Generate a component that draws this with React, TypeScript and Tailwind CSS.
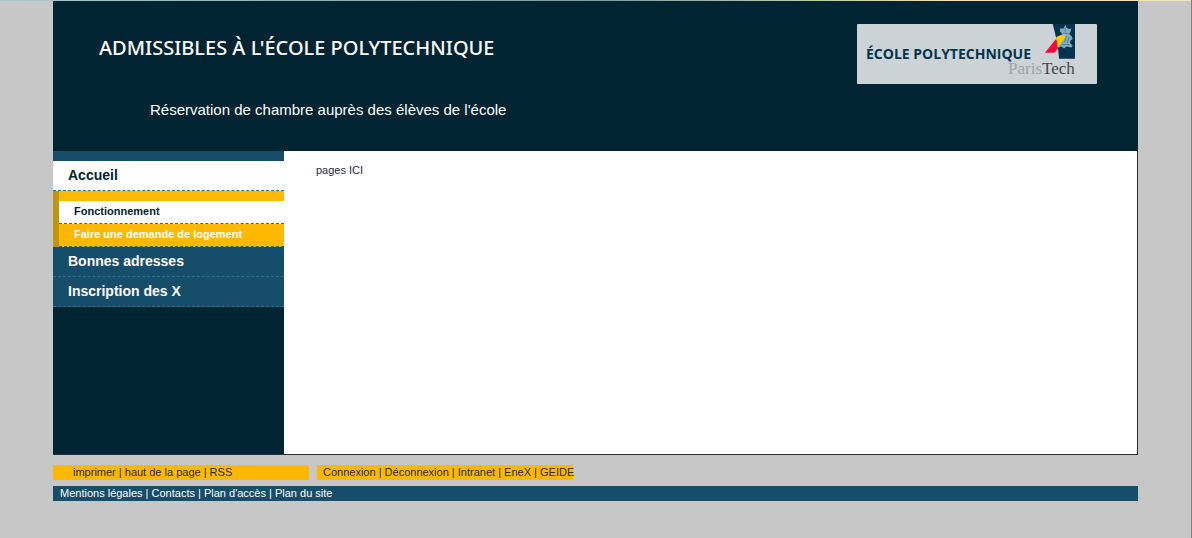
import React from "react";

type LinkItem = { label: string; href: string };

const pageLinks: LinkItem[] = [
  { label: "imprimer", href: "#imprimer" },
  { label: "haut de la page", href: "#haut" },
  { label: "RSS", href: "#rss" },
];

const accountLinks: LinkItem[] = [
  { label: "Connexion", href: "#connexion" },
  { label: "Déconnexion", href: "#deconnexion" },
  { label: "Intranet", href: "#intranet" },
  { label: "EneX", href: "#enex" },
  { label: "GEIDE", href: "#geide" },
];

const siteLinks: LinkItem[] = [
  { label: "Mentions légales", href: "#mentions" },
  { label: "Contacts", href: "#contacts" },
  { label: "Plan d'accès", href: "#acces" },
  { label: "Plan du site", href: "#plan" },
];

function LinkRow({ items }: { items: LinkItem[] }) {
  return (
    <>
      {items.map((item, i) => (
        <React.Fragment key={item.label}>
          {i > 0 && " | "}
          <a href={item.href}>{item.label}</a>
        </React.Fragment>
      ))}
    </>
  );
}

function Logo() {
  return (
    <svg
      viewBox="0 0 240 60"
      className="h-[60px] w-[240px] shrink-0 rounded-[1px] bg-[#cbd3d6]"
      role="img"
      aria-label="École Polytechnique ParisTech"
    >
      <path d="M195.7 0H218V34.700H202C201.400 23 198.500 10 195.700 0Z" fill="#043350" />
      <path d="M188 28.700 198.500 15.500 206.500 17.500 197.500 28.700Z" fill="#f5083b" />
      <path
        d="M208.300 1 209.700 4 212.500 5 214 4.500 213.500 8 212 10 214.500 12 215.700 15 213.500 16.500 213 19 215.500 21.500 214.500 23.500 209.500 22.500 207 24.500 204.500 22.500 201 23.500 200.500 21.500 203.500 19 204 16 201.500 14 203 11.500 205.500 10 203 7.500 203 4.500 206.500 4.500Z"
        fill="#7fadc6"
      />
      <path
        d="M208.300 3.500V8M205.500 9 211.500 9.500M209.500 12 207.500 18M212 13 210.500 19M204.500 20.500 212.500 20.500"
        fill="none"
        stroke="#3e708f"
        strokeWidth="0.7"
      />
      <path d="M198.800 14C200.500 11.500 204 10.800 209 11.500L206 16.500 200.500 23.500C200.500 20.500 200 17 198.800 14Z" fill="#fdcb00" />
      <text x="9" y="35" fontSize="14" fontWeight="700" fill="#043350" className="font-['Open_Sans',sans-serif]">
        ÉCOLE POLYTECHNIQUE
      </text>
      <text x="151" y="50" fontSize="17" fill="#9fa5a8" className="font-['Liberation_Serif',serif]">
        Paris<tspan fill="#47484c">Tech</tspan>
      </text>
    </svg>
  );
}

function MainItem({ label, href, active = false }: LinkItem & { active?: boolean }) {
  return (
    <a
      href={href}
      className={
        active
          ? "block border-b border-dashed border-[#1c7783] bg-white px-[15px] pb-px text-sm leading-7 font-bold text-[#012432]"
          : "block border-b border-dashed border-[#1c7783] bg-[#164d6b] px-[15px] pb-px text-sm leading-7 font-bold text-white"
      }
    >
      {label}
    </a>
  );
}

function SubItem({ label, href, active = false }: LinkItem & { active?: boolean }) {
  return (
    <a
      href={href}
      className={
        active
          ? "block border-b border-dashed border-[#1c7783] bg-white px-[15px] pb-[2px] text-[11px] leading-5 font-bold text-[#012432]"
          : "block border-b border-dashed border-[#1c7783] bg-[#ffb800] px-[15px] pb-[2px] text-[11px] leading-5 font-bold text-white"
      }
    >
      {label}
    </a>
  );
}

export default function App() {
  return (
    <div
      id="haut"
      className="min-h-screen border-r border-[#808080] bg-[#c7c7c7] font-['Liberation_Sans',Arial,sans-serif] text-[11px] text-[#2b2b38]"
    >
      <div className="h-px bg-linear-to-r from-[#a9c9cb] from-0% via-[#7f9c9e] via-50% to-[#f0e4b8] to-80%" />
      <div className="mx-[53px]">
        <header className="flex h-[150px] items-start justify-between bg-[#012432] pr-[41px] pl-[46px] text-white">
          <div>
            <h1 className="pt-[33px] font-['Noto_Sans',sans-serif] text-xl leading-7 font-medium">
              ADMISSIBLES À L'ÉCOLE POLYTECHNIQUE
            </h1>
            <p className="pt-9 pl-[51px] text-[15px] leading-6">
              Réservation de chambre auprès des élèves de l'école
            </p>
          </div>
          <div className="pt-[23px]">
            <Logo />
          </div>
        </header>

        <div className="flex min-h-[304px] border-b border-[#2b2b38]">
          <nav className="w-[231px] shrink-0 bg-[#012432]">
            <div className="h-[10px] bg-[#164d6b]" />
            <MainItem label="Accueil" href="#accueil" active />
            <div className="border-l-6 border-[#c0960c] bg-[#ffb800] pt-[10px]">
              <SubItem label="Fonctionnement" href="#fonctionnement" active />
              <SubItem label="Faire une demande de logement" href="#demande" />
            </div>
            <MainItem label="Bonnes adresses" href="#adresses" />
            <MainItem label="Inscription des X" href="#inscription" />
          </nav>
          <main className="grow border-r border-[#2b2b38] bg-white px-8 py-[11px] leading-4">
            <p>pages ICI</p>
          </main>
        </div>

        <footer className="pt-[10px] leading-[15px]">
          <div className="flex gap-2">
            <div className="w-64 bg-[#ffb800] pl-5 whitespace-nowrap">
              <LinkRow items={pageLinks} />
            </div>
            <div className="w-64 bg-[#ffb800] pl-[6px] whitespace-nowrap">
              <LinkRow items={accountLinks} />
            </div>
          </div>
          <div className="mt-[6px] bg-[#164d6b] pl-[7px] text-white">
            <LinkRow items={siteLinks} />
          </div>
        </footer>
      </div>
    </div>
  );
}
